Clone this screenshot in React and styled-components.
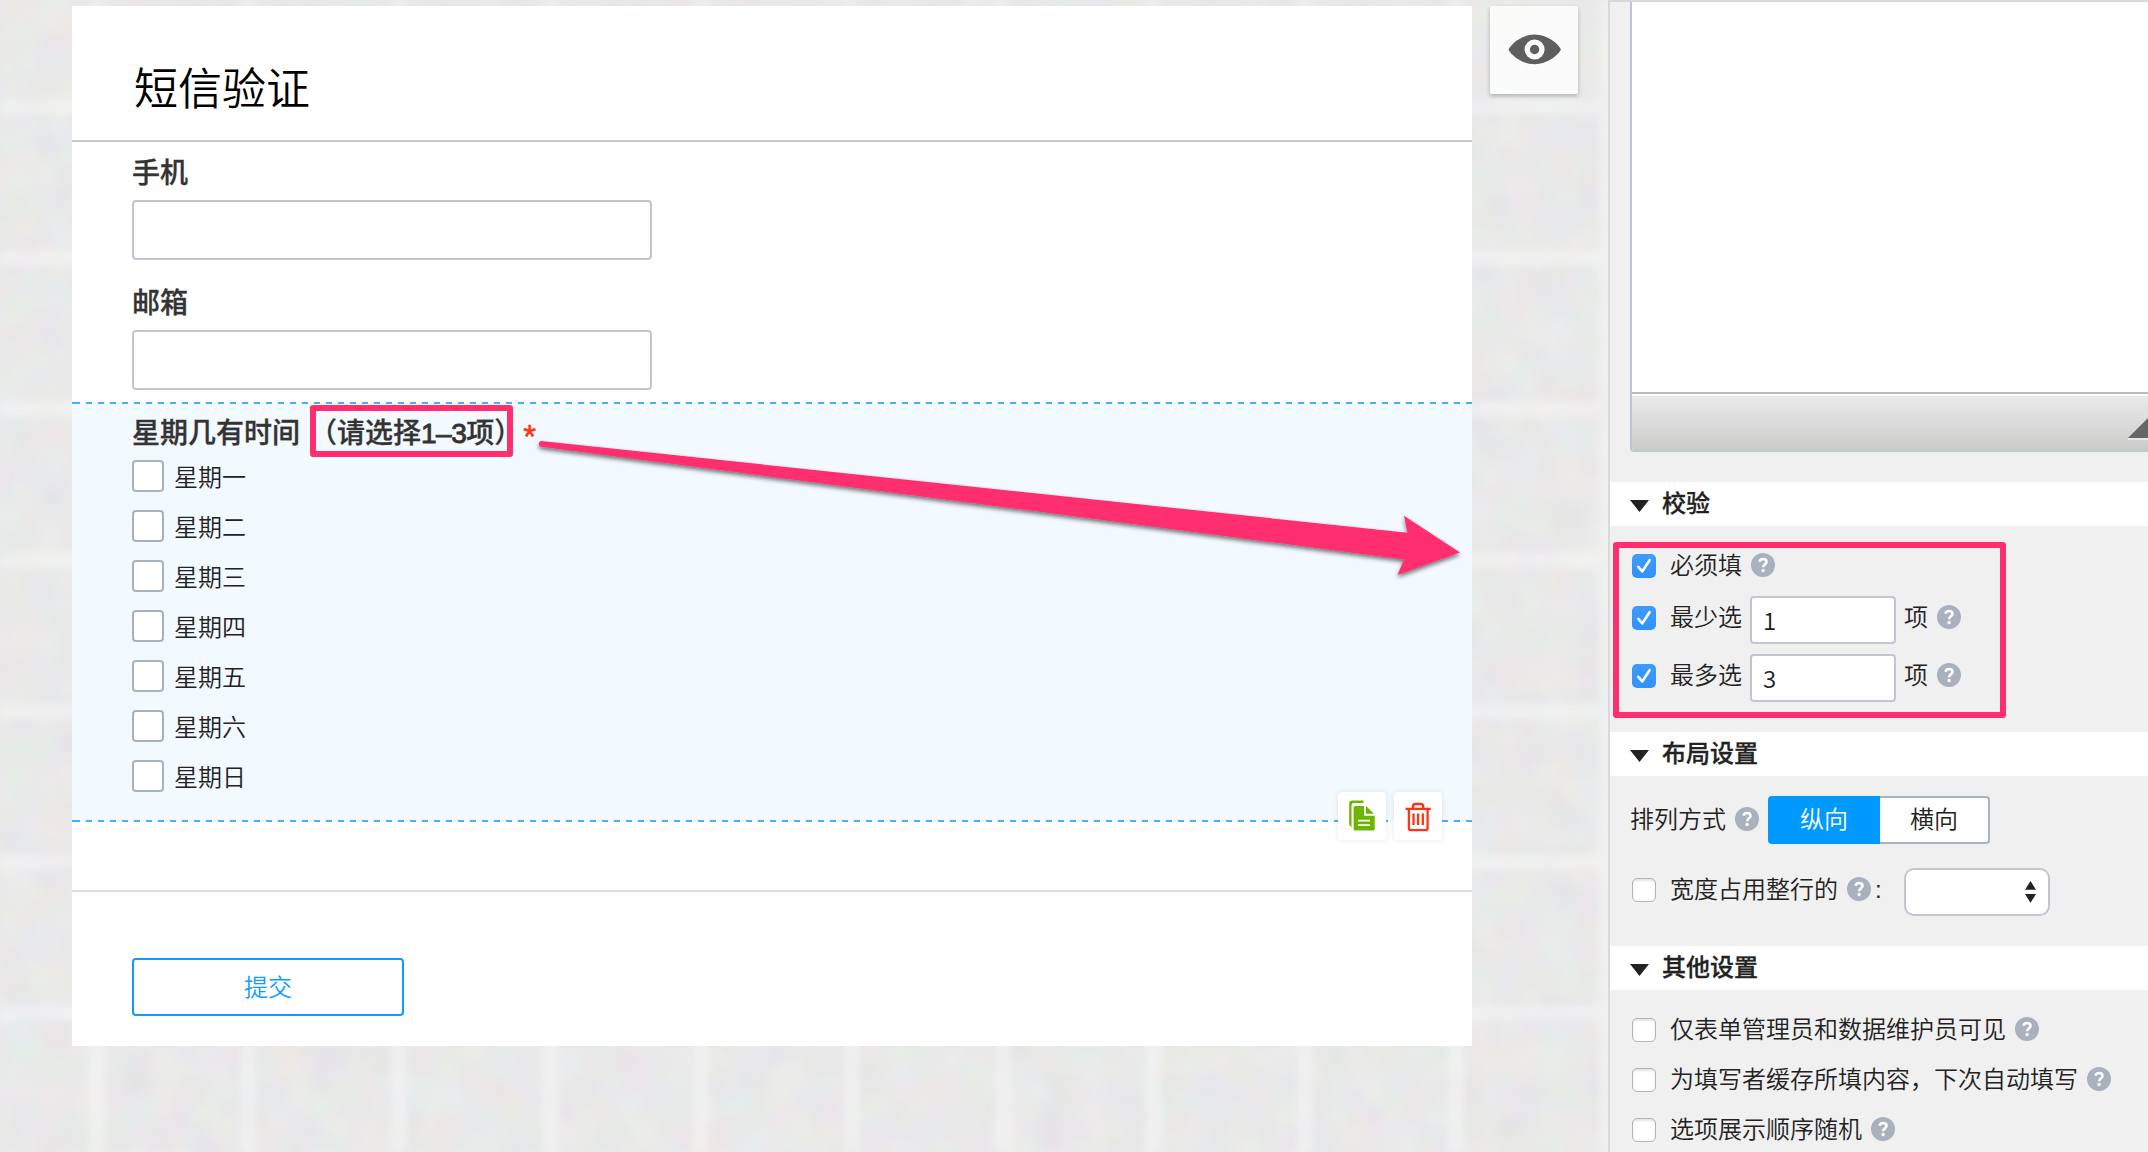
import React from "react";
import styled, { createGlobalStyle } from "styled-components";

const PINK = "#ff2f6e";
const FONT = '"Liberation Sans", "Noto Sans CJK SC", sans-serif';

const GlobalStyle = createGlobalStyle`
  *, *::before, *::after { box-sizing: border-box; }
  body { margin: 0; overflow: hidden; font-family: ${FONT}; color: #222; }
`;

const Page = styled.div`
  position: relative;
  display: flex;
  width: 2148px;
  height: 1152px;
  overflow: hidden;
`;

const Canvas = styled.main`
  position: relative;
  display: flex;
  align-items: flex-start;
  gap: 18px;
  width: 1608px;
  height: 100%;
  padding: 6px 0 0 72px;
  background: #e8e8e8;
`;

const Texture = styled.svg`
  position: absolute;
  inset: 0;
`;

const Card = styled.section`
  position: relative;
  width: 1400px;
  height: 1040px;
  background: #fff;
`;

const Title = styled.h1`
  height: 136px;
  margin: 0;
  padding: 54px 62px 0;
  border-bottom: 2px solid #c4c8cf;
  color: #000;
  font-size: 44px;
  font-weight: 350;
  line-height: 60px;
`;

const Field = styled.div`
  height: 130px;
  padding: 12px 60px 0;
`;

const FieldLabel = styled.div`
  display: flex;
  height: 40px;
  color: #333;
  font-size: 28px;
  font-weight: 500;
  line-height: 40px;
  white-space: nowrap;
  -webkit-text-stroke: 0.3px #333;
`;

const TextBox = styled.div`
  width: 520px;
  height: 60px;
  margin-top: 6px;
  border: 2px solid #c1c5cf;
  border-radius: 4px;
  background: #fff;
`;

const dashes = "repeating-linear-gradient(to right, #42b1fb 0 6px, transparent 6px 12px)";

const Selected = styled.div`
  position: relative;
  height: 420px;
  padding: 12px 60px 0;
  background:
    linear-gradient(#42b1fb, #42b1fb) 0 0 / 2px 2px no-repeat,
    linear-gradient(#42b1fb, #42b1fb) 0 100% / 2px 2px no-repeat,
    ${dashes} 2px 0 / 1398px 2px no-repeat,
    ${dashes} 2px 100% / 1398px 2px no-repeat,
    #f2f9ff;
`;

const Hint = styled.span`
  margin-left: 9px;
`;

const Range = styled.span`
  letter-spacing: -0.5px;
  -webkit-text-stroke: 0.9px #333;
`;

const Required = styled.span`
  margin-left: 1px;
  color: #ff3412;
  font-size: 33px;
  font-weight: 400;
  line-height: 46px;
  -webkit-text-stroke: 0.5px #ff3412;
`;

const Options = styled.div`
  display: grid;
  row-gap: 18px;
  margin-top: 6px;
`;

const Option = styled.div`
  display: flex;
  align-items: center;
  gap: 10px;
  height: 32px;
  font-size: 24px;
  font-weight: 350;
  line-height: 36px;
`;

const BigCheck = styled.span`
  width: 32px;
  height: 32px;
  border: 2px solid #aab1be;
  border-radius: 4px;
  background: #fff;
`;

const OptionText = styled.span`
  padding-top: 4px;
`;

const Actions = styled.div`
  position: absolute;
  right: 30px;
  bottom: -18px;
  display: flex;
  gap: 8px;
`;

const ActionTile = styled.div`
  width: 48px;
  height: 48px;
  border-radius: 4px;
  background: #fff;
  box-shadow: 0 0 6px rgba(0, 0, 0, 0.09);
  svg { display: block; }
`;

const Footer = styled.div`
  margin-top: 68px;
  padding: 66px 60px 0;
  border-top: 2px solid #ddd;
`;

const Submit = styled.div`
  width: 272px;
  height: 58px;
  border: 2px solid #0a9eff;
  border-radius: 4px;
  color: #0a9eff;
  font-size: 24px;
  font-weight: 350;
  line-height: 56px;
  text-align: center;
`;

const Preview = styled.div`
  position: relative;
  width: 88px;
  height: 88px;
  border-radius: 2px;
  background: rgba(255, 255, 255, 0.8);
  box-shadow: 0 2px 4px rgba(0, 0, 0, 0.25);
  svg { display: block; }
`;

const Panel = styled.aside`
  width: 540px;
  height: 100%;
  border-top: 2px solid #d8d8d8;
  border-left: 2px solid #d8d8d8;
  background: #f0f0f0;
`;

const Editor = styled.div`
  height: 450px;
  margin: 0 0 30px 20px;
  border-bottom: 2px solid #bfc8cf;
  border-left: 2px solid #bfc5d0;
  border-bottom-left-radius: 4px;
  background: #fff;
  overflow: hidden;
`;

const EditorBar = styled.div`
  display: flex;
  justify-content: flex-end;
  height: 58px;
  margin-top: 390px;
  border-top: 2px solid #bbb;
  background: linear-gradient(#ebebeb, #cbccca);
  box-shadow: inset 0 2px 0 #fff;
  svg { display: block; margin-top: 22px; }
`;

const SectionHead = styled.div`
  display: flex;
  height: 44px;
  padding-left: 20px;
  background: #fff;
  font-size: 24px;
  font-weight: 500;
  line-height: 43px;
  -webkit-text-stroke: 0.3px #222;
`;

const Triangle = styled.svg`
  width: 19px;
  height: 12px;
  margin: 18px 13px 0 0;
`;

const SectionBody = styled.div`
  height: ${(p) => p.$height}px;
  padding: ${(p) => p.$top}px 0 0 20px;
`;

const Row = styled.div`
  display: flex;
  align-items: center;
  height: ${(p) => p.$height}px;
  font-size: 24px;
  font-weight: 350;
  line-height: 36px;
  white-space: nowrap;
`;

const CheckBox = styled.span`
  display: block;
  width: 24px;
  height: 24px;
  margin: 0 14px 0 2px;
  border-radius: 5px;
  border: ${(p) => (p.$on ? "0" : "1px solid #b4b4b4")};
  background: ${(p) => (p.$on ? "linear-gradient(#3f9bfc, #2f92fd)" : "#fff")};
  box-shadow: ${(p) => (p.$on ? "none" : "inset 0 2px 2px #e4e4e4")};
  svg { display: block; }
`;

const HelpIcon = styled.span`
  width: 24px;
  height: 24px;
  margin: -2px 0 0 9px;
  border-radius: 50%;
  background: #a9b1be;
  svg { display: block; }
`;

const NumberBox = styled.span`
  width: 146px;
  height: 48px;
  margin: 4px 8px 0 8px;
  padding: 4px 11px 0;
  border: 2px solid #c1c6d0;
  border-radius: 4px;
  background: #fff;
  font-family: "Noto Sans CJK SC", sans-serif;
`;

const Segment = styled.span`
  display: flex;
  margin-left: 9px;
`;

const SegmentItem = styled.span`
  width: ${(p) => (p.$active ? 112 : 110)}px;
  height: 48px;
  border: 2px solid ${(p) => (p.$active ? "#0099ff" : "#a9b3c0")};
  border-left-width: ${(p) => (p.$active ? 2 : 0)}px;
  border-radius: ${(p) => (p.$active ? "4px 0 0 4px" : "0 4px 4px 0")};
  background: ${(p) => (p.$active ? "#0099ff" : "#fff")};
  color: ${(p) => (p.$active ? "#fff" : "#222")};
  line-height: 44px;
  text-align: center;
`;

const Colon = styled.span`
  width: 33px;
  padding-left: 4px;
`;

const Select = styled.span`
  display: flex;
  justify-content: flex-end;
  width: 146px;
  height: 48px;
  margin-top: 4px;
  padding: 11px 12px 0 0;
  border: 2px solid #c1c6d0;
  border-radius: 10px;
  background: #fff;
`;

const Marker = styled.div`
  position: absolute;
  left: ${(p) => p.$x}px;
  top: ${(p) => p.$y}px;
  width: ${(p) => p.$w}px;
  height: ${(p) => p.$h}px;
  border: 6px solid ${PINK};
  border-radius: 3px;
`;

const ArrowLayer = styled.svg`
  position: absolute;
  left: 0;
  top: 0;
  pointer-events: none;
`;

const days = ["一", "二", "三", "四", "五", "六", "日"];
const gridSteps = Array.from({ length: 11 }, (_, i) => i * 151);

function Backdrop() {
  return (
    <Texture width="1608" height="1152">
      <filter id="grain" x="0" y="0" width="100%" height="100%" colorInterpolationFilters="sRGB">
        <feTurbulence type="fractalNoise" baseFrequency="0.026" numOctaves="2" seed="8" />
        <feColorMatrix values="0.055 0 0 0 0.884  0 0.055 0 0 0.885  0 0 0.055 0 0.884  0 0 0 0 1" />
      </filter>
      <filter id="soft" x="-20" y="-20" width="1700" height="1200" filterUnits="userSpaceOnUse">
        <feGaussianBlur stdDeviation="4" />
      </filter>
      <rect width="1608" height="1152" filter="url(#grain)" />
      <g stroke="#f5f5f5" strokeWidth="15" opacity="0.6" filter="url(#soft)">
        {gridSteps.map((s) => (
          <path key={s} d={`M${97 + s} 0V1152M0 ${107 + s}H1608`} />
        ))}
      </g>
    </Texture>
  );
}

function Check({ on }) {
  return (
    <CheckBox $on={on}>
      {on && (
        <svg width="24" height="24" viewBox="0 0 24 24" fill="none" stroke="#fff" strokeWidth="2.6" strokeLinecap="round" strokeLinejoin="round">
          <path d="M6.3 12.8 10.3 17.4 17.6 6.2" />
        </svg>
      )}
    </CheckBox>
  );
}

function Help() {
  return (
    <HelpIcon>
      <svg width="24" height="24" viewBox="0 0 24 24" fill="none">
        <path d="M8.5 8.7C8.9 6.8 10.2 6 12 6C14.2 6 15.5 7.2 15.5 8.9C15.5 11.3 12.1 11.4 12.1 14.2" stroke="#fff" strokeWidth="2.6" />
        <circle cx="12.1" cy="17.5" r="1.7" fill="#fff" />
      </svg>
    </HelpIcon>
  );
}

function Head({ children }) {
  return (
    <SectionHead>
      <Triangle viewBox="0 0 19 12"><path d="M0 0H19L9.5 12Z" fill="#222" /></Triangle>
      {children}
    </SectionHead>
  );
}

export default function App() {
  return (
    <Page>
      <GlobalStyle />
      <Canvas>
        <Backdrop />
        <Card>
          <Title>短信验证</Title>
          <Field>
            <FieldLabel>手机</FieldLabel>
            <TextBox />
          </Field>
          <Field>
            <FieldLabel>邮箱</FieldLabel>
            <TextBox />
          </Field>
          <Selected>
            <FieldLabel>
              星期几有时间<Hint>（请选择<Range>1–3</Range>项）</Hint><Required>*</Required>
            </FieldLabel>
            <Options>
              {days.map((d) => (
                <Option key={d}>
                  <BigCheck />
                  <OptionText>星期{d}</OptionText>
                </Option>
              ))}
            </Options>
            <Actions>
              <ActionTile>
                <svg width="48" height="48" viewBox="0 0 48 48">
                  <path d="M25.5 9.3V8.6H14.2Q11.2 8.6 11.200 11.2V32.5L13.500 35.5V13.4Q13.500 11 16 11H25.5Z" fill="#6cb500" />
                  <path d="M15.600 15.5Q15.600 13.9 17.200 13.9H26V23.8H36.7V37Q36.7 38.6 35.1 38.6H17.200Q15.600 38.6 15.600 37Z" fill="#6cb500" />
                  <path d="M28 13.9 36 21.8H28Z" fill="#6cb500" />
                  <path d="M20 28.6H32M20 33.1H32" stroke="#fff" strokeWidth="1.9" />
                </svg>
              </ActionTile>
              <ActionTile>
                <svg width="48" height="48" viewBox="0 0 48 48" fill="none" stroke="#ff3412" strokeWidth="2.3">
                  <path d="M11.5 16.9H36.8" />
                  <path d="M14.9 17V36Q14.9 38.2 17 38.2H31.5Q33.6 38.2 33.6 36V17" />
                  <path d="M19 16.5V14.4Q19 12 21.4 12H26.8Q29.2 12 29.2 14.4V16.5" />
                  <path d="M19.5 21.5V33M24.1 21.5V33M28.8 21.5V33" />
                </svg>
              </ActionTile>
            </Actions>
          </Selected>
          <Footer>
            <Submit>提交</Submit>
          </Footer>
        </Card>
        <Preview>
          <svg width="88" height="88" viewBox="0 0 88 88">
            <path d="M18.5 43.6C21.5 37.5 32 28.6 44.7 28.6S67.9 37.5 70.9 43.6C67.9 49.7 57.4 58.2 44.7 58.2S21.5 49.7 18.5 43.6Z" fill="#5e5e5e" />
            <circle cx="44.6" cy="43.5" r="10" fill="#fbfbfb" />
            <circle cx="44.6" cy="43.5" r="4.7" fill="#5e5e5e" />
          </svg>
        </Preview>
      </Canvas>

      <Panel>
        <Editor>
          <EditorBar>
            <svg width="20" height="24" viewBox="0 0 20 24">
              <path d="M0 22H20V24H0Z" fill="#e6e6e6" />
              <path d="M0 22 20 2V22Z" fill="#666" />
            </svg>
          </EditorBar>
        </Editor>

        <Head>校验</Head>
        <SectionBody $height={206} $top={22}>
          <Row $height={36}><Check on />必须填<Help /></Row>
          <Row $height={68}><Check on />最少选<NumberBox>1</NumberBox>项<Help /></Row>
          <Row $height={48}><Check on />最多选<NumberBox>3</NumberBox>项<Help /></Row>
        </SectionBody>

        <Head>布局设置</Head>
        <SectionBody $height={170} $top={20}>
          <Row $height={48}>
            排列方式<Help />
            <Segment>
              <SegmentItem $active>纵向</SegmentItem>
              <SegmentItem>横向</SegmentItem>
            </Segment>
          </Row>
          <Row $height={92}><Check />宽度占用整行的<Help /><Colon>:</Colon><Select>
            <svg width="11" height="22" viewBox="0 0 11 22" fill="#222">
              <path d="M0 8.8H11L5.5 0Z" />
              <path d="M0 13H11L5.5 21.8Z" />
            </svg>
          </Select></Row>
        </SectionBody>

        <Head>其他设置</Head>
        <SectionBody $height={162} $top={15}>
          <Row $height={50}><Check />仅表单管理员和数据维护员可见<Help /></Row>
          <Row $height={50}><Check />为填写者缓存所填内容，下次自动填写<Help /></Row>
          <Row $height={50}><Check />选项展示顺序随机<Help /></Row>
        </SectionBody>
      </Panel>

      <Marker $x={310} $y={405} $w={203} $h={52} />
      <Marker $x={1613} $y={542} $w={393} $h={176} />
      <ArrowLayer width="1500" height="620">
        <filter id="arrowShadow" x="-5%" y="-10%" width="110%" height="130%">
          <feDropShadow dx="0" dy="2.5" stdDeviation="2" floodColor="#000" floodOpacity="0.55" />
        </filter>
        <path
          d="M541 441 1407.5 532.7 1404 515.7 1460 552.5 1397.5 575 1404 559.5 541 446.7Q538.5 446 538.8 443.5T541 441Z"
          fill={PINK}
          filter="url(#arrowShadow)"
        />
      </ArrowLayer>
    </Page>
  );
}
